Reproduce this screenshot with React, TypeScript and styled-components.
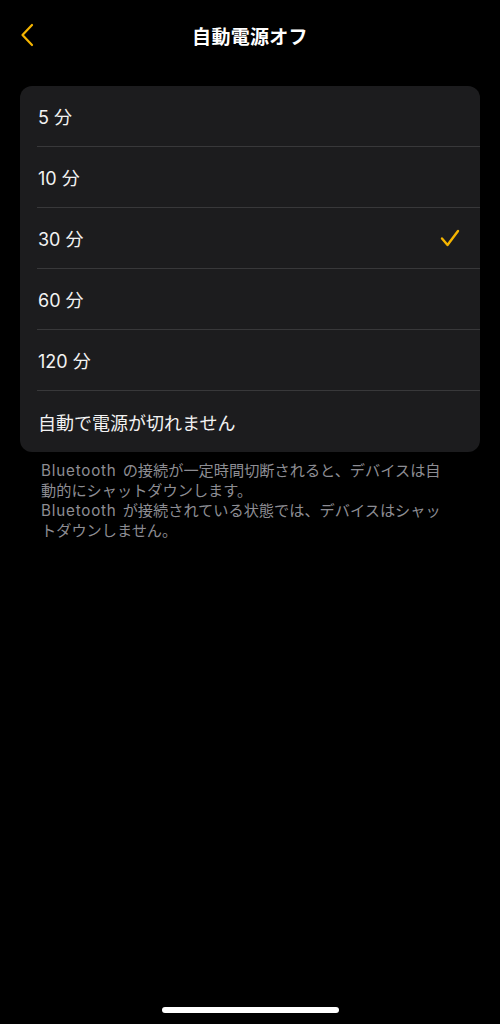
import styled, { createGlobalStyle } from 'styled-components';

const GlobalStyle = createGlobalStyle`
  html, body {
    margin: 0;
    padding: 0;
    background: #000;
  }
  body {
    font-family: Inter, "Noto Sans CJK JP", sans-serif;
    -webkit-font-smoothing: antialiased;
  }
`

const options = ['5 分', '10 分', '30 分', '60 分', '120 分', '自動で電源が切れません']
const selected = 2

// footnote lines, broken where the device wraps them
const notes = [
  { brand: true, text: 'の接続が一定時間切断されると、デバイスは自' },
  { brand: false, text: '動的にシャットダウンします。' },
  { brand: true, text: 'が接続されている状態では、デバイスはシャッ' },
  { brand: false, text: 'トダウンしません。' },
]

const App = () => {
  return (
    <Screen>
      <GlobalStyle />
      <NavBar>
        <BackButton aria-label="戻る">
          <svg width="14" height="24" viewBox="0 0 14 24" fill="none">
            <path d="M12 2 L2.5 12 L12 22" stroke="#F4B400" strokeWidth="2.2" strokeLinecap="round" strokeLinejoin="round" />
          </svg>
        </BackButton>
        <Title>自動電源オフ</Title>
      </NavBar>

      <Card>
        {options.map((label, i) => (
          <Row key={label} $last={i === options.length - 1}>
            <RowLabel>{label}</RowLabel>
            {i === selected && (
              <svg width="20" height="18" viewBox="0 0 20 18" fill="none">
                <path d="M2 9.5 L7.5 16 L18 2" stroke="#F4B400" strokeWidth="2.4" strokeLinecap="round" strokeLinejoin="round" />
              </svg>
            )}
          </Row>
        ))}
      </Card>

      <Footnote>
        {notes.map((n, i) => (
          <NoteLine key={i}>
            {n.brand && <Brand>Bluetooth</Brand>}
            {n.text}
          </NoteLine>
        ))}
      </Footnote>

      <Spacer />
      <HomeIndicator />
    </Screen>
  )
}

export default App

const Screen = styled.div`
  width: 500px;
  height: 1024px;
  background: #000;
  display: flex;
  flex-direction: column;
  overflow: hidden;
`
const NavBar = styled.div`
  height: 70px;
  display: flex;
  align-items: center;
  justify-content: center;
  position: relative;
`
const BackButton = styled.button`
  position: absolute;
  left: 20px;
  top: 23px;
  background: none;
  border: none;
  padding: 0;
  display: flex;
`
const Title = styled.h1`
  margin: 0;
  color: #fff;
  font-size: 19px;
  font-weight: 700;
  letter-spacing: 0.3px;
`
const Card = styled.div`
  margin: 16px 20px 0;
  background: #1c1c1e;
  border-radius: 12px;
  overflow: hidden;
`
const Row = styled.div<{ $last?: boolean }>`
  height: 61px;
  margin-left: 17px;
  padding-left: 1px;
  padding-right: 20px;
  box-sizing: border-box;
  display: flex;
  align-items: center;
  justify-content: space-between;
  border-bottom: ${p => (p.$last ? 'none' : '1px solid #38383a')};
`
const RowLabel = styled.span`
  color: #f2f2f2;
  font-size: 18px;
`
const Footnote = styled.div`
  margin: 9px 20px 0 41px;
  color: #8d8d93;
  font-size: 15.2px;
  line-height: 20px;
`
const NoteLine = styled.div`
  white-space: nowrap;
`
const Brand = styled.span`
  letter-spacing: 0.8px;
  margin-right: 6px;
`
const Spacer = styled.div`
  flex: 1;
`
const HomeIndicator = styled.div`
  align-self: center;
  width: 177px;
  height: 6px;
  border-radius: 3px;
  background: #fff;
  margin-bottom: 11px;
`
